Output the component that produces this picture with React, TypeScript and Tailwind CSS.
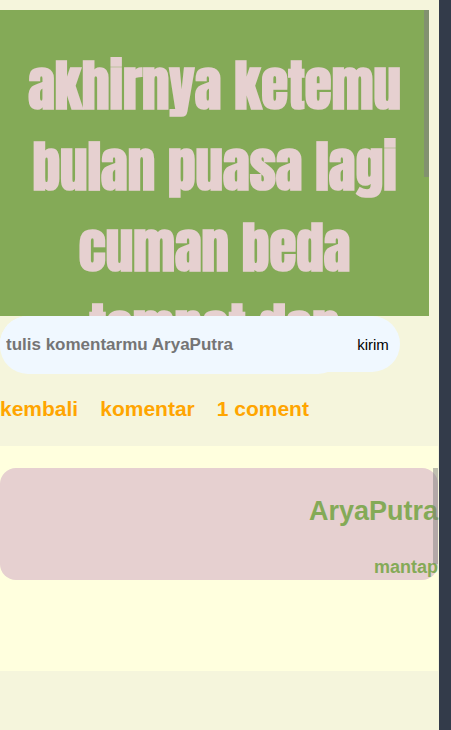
function Post() {
  return (
    <article className="relative mr-[10px] h-[306px] overflow-hidden bg-[#84aa57] px-5 pt-[35px] text-center">
      <p className="font-['Impact','Anton','Roboto_Condensed',sans-serif] text-[55px] leading-[81px] font-bold text-[#e6d0d0]">
        akhirnya ketemu bulan puasa lagi cuman beda tempat dan
      </p>
      <div className="absolute top-0 right-0 h-[167px] w-[5px] bg-[#808080]/60" />
    </article>
  );
}

function CommentForm() {
  return (
    <form className="h-14 w-[400px] max-w-full rounded-[28px] bg-[#f0f8ff]" onSubmit={(e) => e.preventDefault()}>
      <div className="flex items-start">
        <input
          type="text"
          aria-label="tulis komentarmu"
          placeholder="tulis komentarmu AryaPutra"
          className="h-[58px] min-w-0 flex-1 rounded-[28px] bg-[#f0f8ff] px-[6px] text-[17px] font-bold outline-none placeholder:text-[#757575]"
        />
        <button type="submit" className="h-[58px] w-[54px] text-[15px] text-black">
          kirim
        </button>
      </div>
    </form>
  );
}

function Links() {
  return (
    <nav className="mt-6 flex h-[50px] gap-[22px] text-[21px] leading-[26px] font-bold text-[#ffa500]">
      <a href="#kembali">kembali</a>
      <a href="#komentar">komentar</a>
      <a href="#coment">1 coment</a>
    </nav>
  );
}

function Comments() {
  return (
    <section className="mr-px h-[225px] bg-[#ffffde] pt-[22px]">
      <div className="relative">
        <article className="h-28 rounded-2xl bg-[#e6d0d0] pt-[27px] text-right font-bold text-[#84aa57]">
          <h2 className="text-[27px] leading-8">AryaPutra</h2>
          <p className="mt-7 text-[18px] leading-6">mantap</p>
        </article>
        <div className="absolute top-0 right-0 h-24 w-[5px] bg-[#808080]/50" />
      </div>
    </section>
  );
}

export default function App() {
  return (
    <div className="flex min-h-screen bg-[#f5f5dc] font-['Liberation_Sans',Arial,sans-serif]">
      <main className="min-w-0 flex-1 pt-[10px]">
        <Post />
        <CommentForm />
        <Links />
        <Comments />
      </main>
      <div className="w-3 shrink-0 bg-[#333b4a]" />
    </div>
  );
}
